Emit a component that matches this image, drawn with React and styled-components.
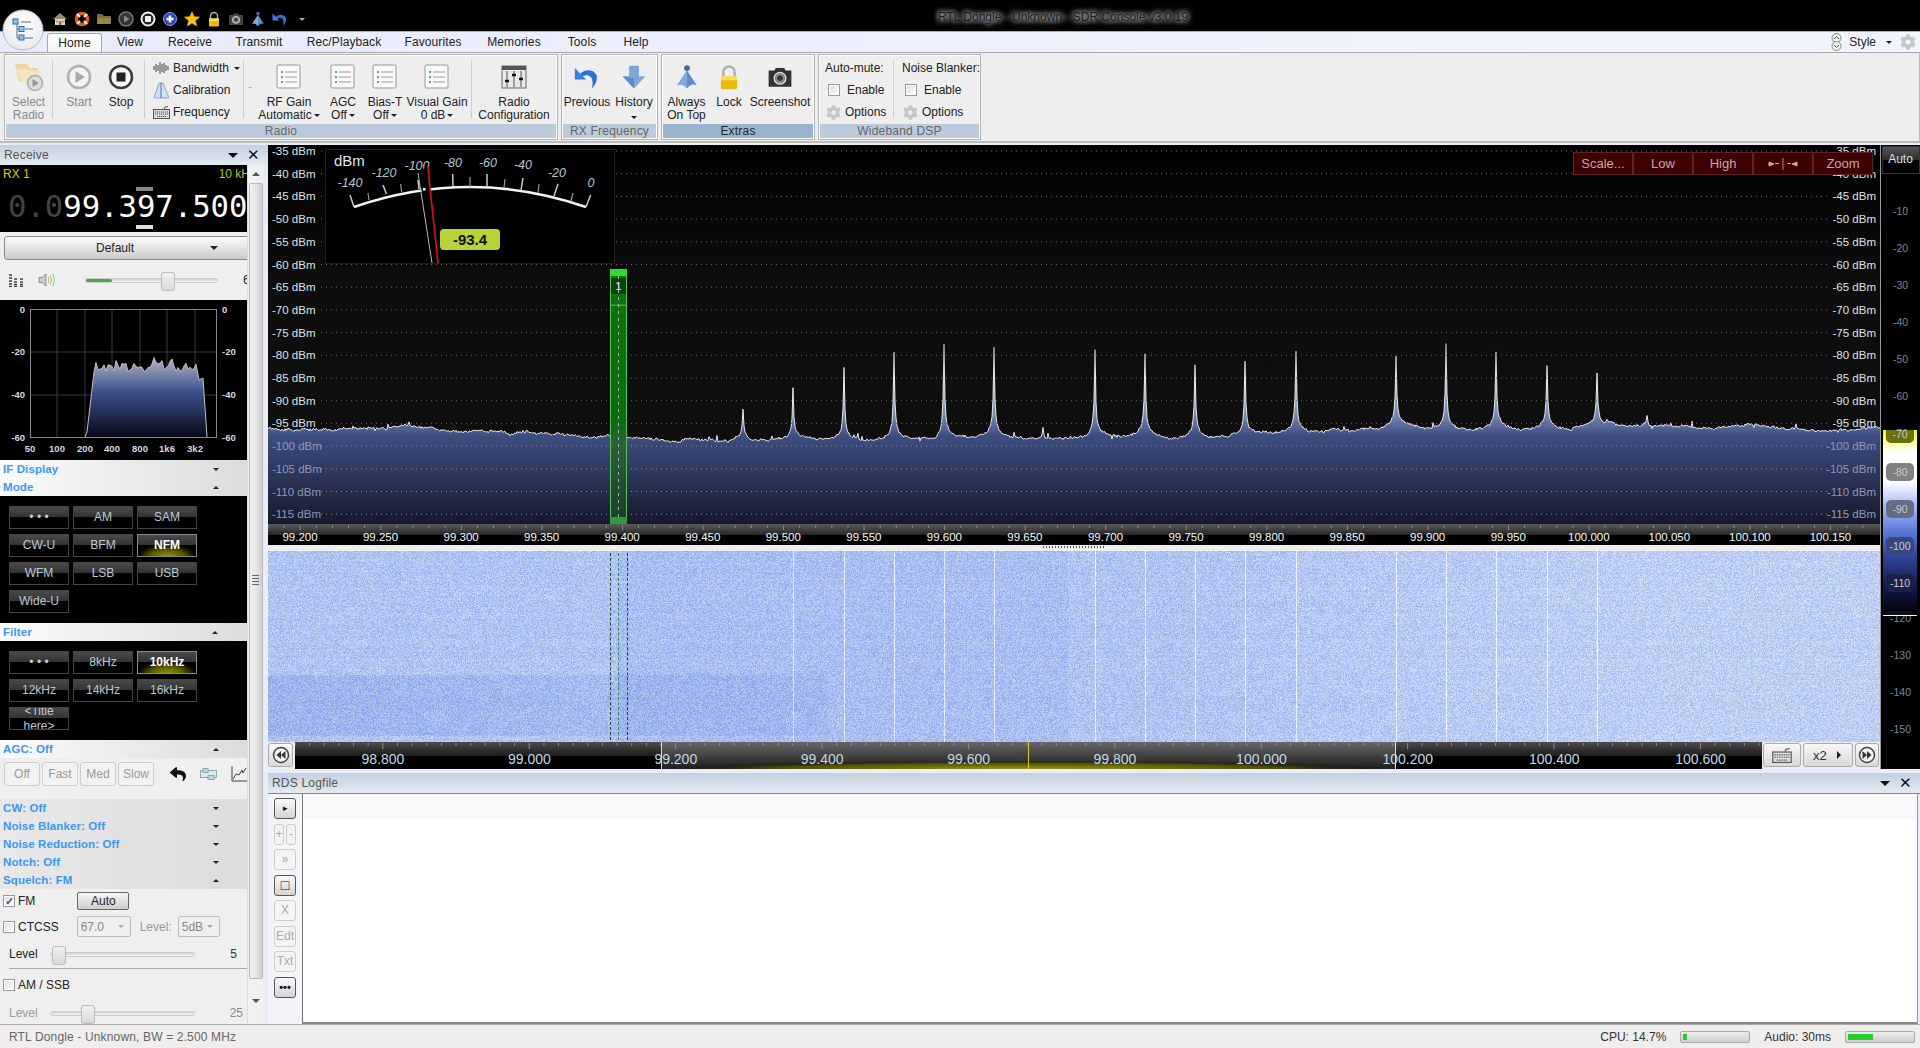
import React, { useEffect, useRef } from 'react';
import styled, { createGlobalStyle } from 'styled-components';
import { FaCog, FaReply } from 'react-icons/fa';

const UI = `"Liberation Sans", Arial, sans-serif`;

const GlobalStyle = createGlobalStyle`
    html, body { margin: 0; padding: 0; background: #e9edfb; overflow: hidden; }
    * { box-sizing: border-box; }
`;

const rng = (seed) => () => (seed = (seed * 16807) % 2147483647) / 2147483647;

/* ---------- shell ---------- */
const Shell = styled.div`
    width: 1920px;
    height: 1048px;
    display: flex;
    flex-direction: column;
    font-family: ${UI};
    font-size: 12px;
    color: #222;
    overflow: hidden;
    position: relative;
`;

const TitleBar = styled.div`
    height: 31px;
    flex: none;
    background: #000;
    display: flex;
    align-items: center;
    padding: 7px 0 0 49px;
`;

const Qat = styled.div`
    display: flex;
    align-items: center;
    width: 264px;
`;

const QatSlot = styled.span`
    width: 22px;
    height: 18px;
    display: flex;
    align-items: center;
    justify-content: center;
`;

const WindowTitle = styled.div`
    margin: -5px 0 0 625px;
    color: #1c1c1c;
    font-size: 12px;
    text-shadow: 0 0 5px #bbb, 0 0 5px #bbb, 0 0 8px #999;
`;

const OrbWrap = styled.div`
    position: absolute;
    left: 2px;
    top: 9px;
    width: 42px;
    height: 42px;
    z-index: 3;
`;

const TabBar = styled.div`
    height: 21px;
    flex: none;
    background: linear-gradient(90deg, #e8ecfa, #f1f5ff);
    border-top: 1px solid #aaa;
    display: flex;
    align-items: flex-end;
    padding-left: 47px;
`;

const Tab = styled.div`
    width: ${(p) => p.$w}px;
    height: 19px;
    text-align: center;
    line-height: 18px;
    letter-spacing: 0.1px;
    ${(p) => p.$active && `
        background: linear-gradient(#fff, #f4f4f4);
        border: 1px solid #aaa;
        border-bottom: none;
        border-radius: 3px 3px 0 0;
    `}
`;

const StyleArea = styled.div`
    margin-left: auto;
    height: 20px;
    display: flex;
    align-items: center;
    padding-right: 4px;
`;

const StyleLabel = styled.span`
    margin: 0 10px 0 6px;
`;

const Caret = styled.span`
    width: 0;
    height: 0;
    display: inline-block;
    border-left: ${(p) => p.$s || 3}px solid transparent;
    border-right: ${(p) => p.$s || 3}px solid transparent;
    ${(p) => (p.$up ? 'border-bottom' : 'border-top')}: ${(p) => p.$s || 3}px solid ${(p) => p.$c || '#222'};
`;

/* ---------- ribbon ---------- */
const Ribbon = styled.div`
    height: 91px;
    flex: none;
    background: #eee;
    border-top: 1px solid #aaa;
    border-right: 1px solid #bbb;
    border-bottom: 2px solid #bbb;
    display: flex;
    gap: 3px;
    padding: 1px 0 1px 4px;
`;

const Group = styled.div`
    width: ${(p) => p.$w}px;
    display: flex;
    flex-direction: column;
    border: 1px solid #b4b4b4;
    box-shadow: inset 0 0 0 1px #fff;
`;

const GroupBody = styled.div`
    height: 70px;
    display: flex;
    align-items: flex-start;
    padding-top: 2px;
`;

const GroupFooter = styled.div`
    flex: 1;
    margin: 0 1px 1px;
    text-align: center;
    line-height: 14px;
    background: ${(p) => (p.$hot ? '#9ab4d0' : '#bccbdb')};
    color: ${(p) => (p.$hot ? '#222' : '#666')};
    letter-spacing: 0.2px;
`;

const Big = styled.div`
    width: ${(p) => p.$w}px;
    flex: none;
    display: flex;
    flex-direction: column;
    align-items: center;
    color: ${(p) => (p.$off ? '#8a8a8a' : '#222')};
    line-height: 13px;
    text-align: center;
    white-space: nowrap;
`;

const BigIcon = styled.div`
    height: 39px;
    display: flex;
    align-items: center;
    justify-content: center;
`;

const Sep = styled.div`
    width: 1px;
    height: 58px;
    margin: 3px ${(p) => p.$r || 0}px 0 ${(p) => p.$l || 0}px;
    background: #cfcfcf;
    flex: none;
`;

const Dash = styled.div`
    width: 12px;
    flex: none;
    text-align: center;
    color: #aaa;
    line-height: 60px;
`;

const SmallCol = styled.div`
    width: ${(p) => p.$w}px;
    flex: none;
    display: flex;
    flex-direction: column;
    margin-left: ${(p) => p.$l || 0}px;
`;

const SmallRow = styled.div`
    height: 22px;
    display: flex;
    align-items: center;
    gap: ${(p) => p.$gap ?? 5}px;
    white-space: nowrap;
    padding-left: ${(p) => p.$pad || 0}px;
`;

const Check = styled.span`
    width: 12px;
    height: 12px;
    flex: none;
    display: inline-flex;
    border: 1px solid #999;
    background: linear-gradient(135deg, #ddd, #fff);
    box-shadow: inset 0 0 0 1px #fff;
    align-items: center;
    justify-content: center;
    color: #3c52a8;
    font-size: 11px;
    line-height: 10px;
    font-weight: bold;
`;

/* ---------- layout of the body ---------- */
const Body = styled.div`
    flex: 1;
    display: flex;
    margin-top: 2px;
    min-height: 0;
`;

const LeftPane = styled.div`
    width: 268px;
    flex: none;
    display: flex;
    flex-direction: column;
`;

const PaneHeader = styled.div`
    height: ${(p) => p.$h || 20}px;
    flex: none;
    background: linear-gradient(#c3d1de, #e3eaf1);
    display: flex;
    align-items: center;
    padding: 0 8px 0 4px;
    color: #555;
    letter-spacing: 0.2px;
    ${(p) => p.$line && 'border-bottom: 1px solid #888;'}
`;

const HeaderTools = styled.div`
    margin-left: auto;
    display: flex;
    align-items: center;
    gap: 9px;
    color: #111;
    font-size: 15px;
    line-height: 12px;
`;

const LeftRow = styled.div`
    flex: 1;
    display: flex;
    min-height: 0;
`;

const LeftColumn = styled.div`
    width: 247px;
    flex: none;
    display: flex;
    flex-direction: column;
    background: #efefef;
    overflow: hidden;
`;

const Scrollbar = styled.div`
    width: 16px;
    flex: none;
    background: #f1f1f1;
    display: flex;
    flex-direction: column;
    align-items: center;
    border-left: 1px solid #ddd;
`;

const ScrollEnd = styled.div`
    height: ${(p) => p.$h}px;
    display: flex;
    align-items: center;
    justify-content: center;
`;

const ScrollThumb = styled.div`
    width: 14px;
    height: 810px;
    border: 1px solid #bbb;
    border-radius: 2px;
    background: linear-gradient(90deg, #f4f4f4, #e4e4e4 50%, #cfcfcf);
    display: flex;
    flex-direction: column;
    align-items: center;
    justify-content: center;
    gap: 1px;
`;

const GripLine = styled.i`
    display: block;
    width: 7px;
    height: 1px;
    background: #666;
    margin-bottom: 1px;
`;

const Sash = styled.div`
    flex: 1;
    background: #e9edfb;
`;

/* ---------- receive panel ---------- */
const FreqPanel = styled.div`
    height: 67px;
    flex: none;
    background: #000;
    position: relative;
    overflow: hidden;
`;

const RxLine = styled.div`
    display: flex;
    justify-content: space-between;
    padding: 2px 0 0 3px;
    margin-right: -9px;
    line-height: 15px;
    color: #d8d000;
`;

const RxBand = styled.span`
    color: #a8cf10;
`;

const FreqText = styled.div`
    font-family: "DejaVu Sans Mono", monospace;
    font-size: 30.6px;
    line-height: 34px;
    margin: 8px 0 0 8px;
    color: #fff;
    white-space: nowrap;
`;

const FreqDim = styled.span`
    color: #444;
`;

const DigitBar = styled.div`
    position: absolute;
    left: 136px;
    width: 17px;
    height: 4px;
    top: ${(p) => p.$top}px;
    background: ${(p) => p.$c};
`;

const PresetArea = styled.div`
    height: 68px;
    flex: none;
    padding-top: 4px;
`;

const PresetButton = styled.div`
    height: 24px;
    margin-left: 4px;
    width: 250px;
    border: 1px solid #888;
    border-radius: 3px;
    background: linear-gradient(#fafafa, #e6e6e6 45%, #cacaca);
    display: flex;
    align-items: center;
    padding-left: 91px;
`;

const PresetCaret = styled.span`
    margin-left: 76px;
    display: inline-flex;
`;

const VolumeRow = styled.div`
    height: 40px;
    display: flex;
    align-items: center;
    position: relative;
    padding-left: 8px;
`;

const VolumeEnd = styled.span`
    position: absolute;
    left: 243px;
    top: 13px;
`;

const Track = styled.div`
    position: relative;
    width: ${(p) => p.$w}px;
    height: 5px;
    margin-left: ${(p) => p.$l || 0}px;
    border: 1px solid #ccc;
    border-radius: 3px;
    background: linear-gradient(#cfcfcf, #f8f8f8);
    flex: none;
`;

const TrackFill = styled.div`
    width: ${(p) => p.$w}px;
    height: 3px;
    background: #3cb043;
    border-radius: 2px;
`;

const Thumb = styled.div`
    position: absolute;
    top: -7px;
    left: ${(p) => p.$l}px;
    width: 14px;
    height: 19px;
    border: 1px solid #bbb;
    border-radius: 3px;
    background: linear-gradient(#f2f2f2, #d8d8d8);
`;

const AudioBox = styled.div`
    height: 160px;
    flex: none;
    background: #000;
`;

const ChartText = styled.text`
    font-family: ${UI};
    font-size: ${(p) => p.$s || 10}px;
    fill: ${(p) => p.$c || '#d5d9e0'};
    text-anchor: ${(p) => p.$a || 'middle'};
    font-style: ${(p) => (p.$i ? 'italic' : 'normal')};
    font-weight: ${(p) => (p.$b ? 'bold' : 'normal')};
`;

const SectionHeader = styled.div`
    height: ${(p) => p.$h || 18}px;
    flex: none;
    background: ${(p) => (p.$flat ? 'transparent' : 'linear-gradient(90deg, #fbfbfb, #dcdcdc)')};
    display: flex;
    align-items: center;
    padding: 0 28px 0 3px;
    color: #3a97f5;
    font-weight: bold;
    font-size: 11.5px;
    letter-spacing: 0.1px;
    justify-content: space-between;
`;

const CollapseBox = styled.span`
    width: 9px;
    height: 9px;
    display: flex;
    align-items: center;
    justify-content: center;
`;

const ButtonGrid = styled.div`
    height: ${(p) => p.$h}px;
    flex: none;
    background: #000;
    display: grid;
    grid-template-columns: repeat(3, 60px);
    grid-auto-rows: 23px;
    gap: 5px 4px;
    padding: 10px 0 0 9px;
`;

const DarkButton = styled.div`
    border: 1px solid ${(p) => (p.$on ? '#8a8a8a' : '#444')};
    background: ${(p) =>
        p.$on
            ? 'radial-gradient(ellipse 50% 55% at 50% 100%, #8f8f00, #5a5a00 55%, transparent 100%), linear-gradient(#4a4a4a, #333 47%, #000 48%)'
            : 'linear-gradient(#4a4a4a, #333 47%, #000 48%)'};
    color: ${(p) => (p.$on ? '#fff' : '#b9cad6')};
    font-weight: ${(p) => (p.$on ? 'bold' : 'normal')};
    text-align: center;
    line-height: ${(p) => (p.$wrap ? '15px' : '21px')};
    overflow: hidden;
    white-space: ${(p) => (p.$wrap ? 'normal' : 'nowrap')};
    ${(p) => p.$wrap && 'margin: 0; padding-top: 0; display: flex; flex-direction: column; justify-content: center;'}
`;

const AgcRow = styled.div`
    height: 41px;
    flex: none;
    display: flex;
    align-items: flex-start;
    padding: 4px 0 0 4px;
    gap: 2px;
`;

const GhostButton = styled.div`
    width: 37px;
    height: 24px;
    border: 1px solid #ccc;
    border-radius: 3px;
    background: #f2f2f2;
    color: #999;
    text-align: center;
    line-height: 22px;
`;

const AgcIcons = styled.div`
    display: flex;
    align-items: center;
    height: 24px;
    margin-left: 14px;
    gap: 14px;
`;

const CollapsedBlock = styled.div`
    flex: none;
    background: linear-gradient(90deg, #e8e8e8, #dcdcdc);
`;

const OptionRow = styled.div`
    height: ${(p) => p.$h}px;
    flex: none;
    display: flex;
    align-items: center;
    padding-left: ${(p) => p.$l || 3}px;
    gap: ${(p) => p.$gap ?? 3}px;
    position: relative;
`;

const PlainButton = styled.div`
    width: 52px;
    height: 18px;
    margin-left: 39px;
    border: 1px solid #666;
    border-radius: 2px;
    background: linear-gradient(#f6f6f6, #cdcdcd);
    text-align: center;
    line-height: 16px;
`;

const Combo = styled.div`
    width: ${(p) => p.$w}px;
    height: 21px;
    margin-left: ${(p) => p.$l || 0}px;
    border: 1px solid #bbb;
    border-radius: 2px;
    color: #888;
    display: flex;
    align-items: center;
    justify-content: space-between;
    padding: 0 6px 0 3px;
`;

const Faded = styled.span`
    color: #999;
    margin-left: ${(p) => p.$l || 0}px;
`;

const EndValue = styled.span`
    position: absolute;
    right: ${(p) => p.$r}px;
    color: ${(p) => p.$c || '#333'};
`;

const Rule = styled.div`
    height: 1px;
    flex: none;
    background: #aaa;
    margin-left: 9px;
`;

/* ---------- main display ---------- */
const MainPane = styled.div`
    flex: 1;
    display: flex;
    flex-direction: column;
    min-width: 0;
`;

const DisplayRow = styled.div`
    display: flex;
    height: 624px;
    flex: none;
`;

const DisplayColumn = styled.div`
    width: 1612px;
    flex: none;
    display: flex;
    flex-direction: column;
`;

const SpectrumBox = styled.div`
    position: relative;
    height: 379px;
    flex: none;
    background: linear-gradient(#000, #0d0d0d 35%, #0f0f0f);
`;

const BlockSvg = styled.svg`
    display: block;
    flex: none;
`;

const ScaleBar = styled.div`
    position: absolute;
    right: 7px;
    top: 7px;
    display: flex;
    height: 23px;
`;

const ScaleButton = styled.div`
    width: 60px;
    background: #3e0000;
    border: 1px solid #5c2323;
    color: #c4a8a8;
    font-size: 13px;
    text-align: center;
    line-height: 21px;
    display: flex;
    align-items: center;
    justify-content: center;
    gap: 2px;
`;

const SashBar = styled.div`
    height: 6px;
    flex: none;
    background: #eeeeee;
    display: flex;
    justify-content: center;
    align-items: flex-start;
    padding-top: 1px;
`;

const SashDots = styled.div`
    width: 62px;
    height: 2px;
    background: repeating-linear-gradient(90deg, #555 0 1px, transparent 1px 3px);
`;

const WaterfallBox = styled.div`
    height: 191px;
    flex: none;
    position: relative;
`;

const WaterfallCanvas = styled.canvas`
    display: block;
`;

const MarkerLine = styled.div`
    position: absolute;
    top: 2px;
    bottom: 2px;
    left: ${(p) => p.$x}px;
    width: 0;
    border-left: 1px dashed ${(p) => p.$c};
`;

const OverviewBar = styled.div`
    height: 27px;
    flex: none;
    display: flex;
    background: #eee;
`;

const RoundButton = styled.div`
    width: ${(p) => p.$w}px;
    height: 24px;
    margin: 1px ${(p) => p.$r ?? 2}px 0 ${(p) => p.$l || 0}px;
    border: 1px solid #aaa;
    border-radius: 3px;
    background: linear-gradient(#f8f8f8, #d8d8d8);
    display: flex;
    align-items: center;
    justify-content: ${(p) => p.$between ? 'space-between' : 'center'};
    padding: 0 ${(p) => (p.$between ? 9 : 0)}px;
    font-size: 13px;
    color: #234;
    flex: none;
`;

const Strip = styled.div`
    flex: 1;
    background: #000;
    position: relative;
    display: flex;
    flex-direction: column;
    align-items: center;
    border-left: 1px solid #999;
`;

const AutoButton = styled.div`
    width: 38px;
    height: 28px;
    margin-top: 1px;
    border: 1px solid #333;
    background: linear-gradient(#555, #2b2b2b 50%, #000 51%);
    color: #d8e4f0;
    text-align: center;
    line-height: 24px;
    flex: none;
`;

const ScaleList = styled.div`
    margin-top: 19px;
    display: flex;
    flex-direction: column;
    color: #7d8794;
    font-size: 10.5px;
`;

const ScaleItem = styled.div`
    height: 37px;
    line-height: 37px;
    text-align: center;
`;

const ColorBar = styled.div`
    position: absolute;
    left: 2px;
    top: 285px;
    width: 34px;
    height: 186px;
    overflow: hidden;
    border-bottom: 1px solid #fff;
    background: linear-gradient(#f4f400, #fbfb90 6%, #fff 12%, #fff 28%, #a9c0fb 40%, #5a78d8 55%, #2c3e90 70%, #0e1440 88%, #000 100%);
    display: flex;
    flex-direction: column;
    align-items: center;
    gap: 19px;
`;

const ColorChip = styled.div`
    width: 28px;
    height: 18px;
    flex: none;
    margin-top: ${(p) => p.$mt || 0}px;
    border-radius: 5px;
    background: ${(p) => p.$c};
    color: #ccc;
    font-size: 10.5px;
    text-align: center;
    line-height: 18px;
`;

/* ---------- RDS ---------- */
const RdsGap = styled.div`
    height: 4px;
    flex: none;
`;

const RdsBody = styled.div`
    height: 230px;
    flex: none;
    display: flex;
`;

const RdsTools = styled.div`
    width: 34px;
    flex: none;
    background: #f3f4f8;
    display: flex;
    flex-direction: column;
    align-items: center;
    padding-top: 4px;
    gap: 4.5px;
`;

const ToolRow = styled.div`
    display: flex;
    gap: 2px;
`;

const ToolButton = styled.div`
    width: ${(p) => p.$w || 22}px;
    height: 21px;
    border: 1px solid ${(p) => (p.$on ? '#555' : '#ccc')};
    border-radius: 3px;
    background: ${(p) => (p.$on ? 'linear-gradient(#fafafa, #d4d4d4)' : '#f4f4f4')};
    color: ${(p) => (p.$on ? '#111' : '#aaa')};
    text-align: center;
    line-height: 19px;
    font-size: ${(p) => p.$s || 12}px;
    font-weight: ${(p) => (p.$b ? 'bold' : 'normal')};
    display: flex;
    align-items: center;
    justify-content: center;
`;

const LogBox = styled.div`
    flex: 1;
    margin-right: 2px;
    background: #fff;
    border-left: 1px solid #777;
    border-right: 1px solid #999;
    border-bottom: 2px solid #888;
`;

const LogHead = styled.div`
    height: 25px;
    background: #f8f8fa;
`;

/* ---------- status bar ---------- */
const StatusBar = styled.div`
    height: 24px;
    flex: none;
    background: #f0eeec;
    border-top: 1px solid #aaa;
    display: flex;
    align-items: center;
    padding: 0 5px 0 9px;
    color: #666;
    letter-spacing: 0.15px;
`;

const StatusRight = styled.div`
    margin-left: auto;
    display: flex;
    align-items: center;
    color: #333;
    letter-spacing: 0;
`;

const Meter = styled.div`
    width: 70px;
    height: 12px;
    margin: 0 14px;
    border: 1px solid #aaa;
    border-radius: 2px;
    background: linear-gradient(#ececec, #cfcfcf);
    padding: 2px;
    &:last-child { margin-right: 0; }
`;

const MeterFill = styled.div`
    height: 6px;
    width: ${(p) => p.$w}px;
    background: #25cf25;
`;

/* ---------- icons ---------- */
const Orb = () => (
    <svg width="42" height="42" viewBox="0 0 42 42">
        <defs>
            <radialGradient id="orbFill" cx="50%" cy="35%" r="70%">
                <stop offset="0" stopColor="#fff" />
                <stop offset="1" stopColor="#e4e7ee" />
            </radialGradient>
        </defs>
        <circle cx="21" cy="21" r="20" fill="url(#orbFill)" stroke="#bbb" />
        <path d="M15 13 V29 M15 20 H18 M15 29 H18 M19 13 H29 M23 20 H31 M23 29 H31" stroke="#666" fill="none" />
        <rect x="11" y="10" width="5" height="5" fill="#8fc3ee" stroke="#2a6fb0" />
        <rect x="17" y="17.500" width="5" height="5" fill="#8fc3ee" stroke="#2a6fb0" />
        <rect x="17" y="26" width="5" height="5" fill="#8fc3ee" stroke="#2a6fb0" />
    </svg>
);

const Ico = ({ s = 16, children }) => (
    <svg width={s} height={s} viewBox="0 0 16 16">{children}</svg>
);

const House = () => (
    <Ico>
        <path d="M1 8 L8 2 L15 8 Z" fill="#9a8a70" />
        <rect x="3" y="8" width="10" height="6" fill="#e6d9c0" />
        <rect x="7" y="10" width="2.500" height="4" fill="#b5602c" />
        <rect x="4" y="9.500" width="2" height="2" fill="#7aa0c0" />
        <rect x="10.500" y="9.500" width="2" height="2" fill="#7aa0c0" />
    </Ico>
);
const Lifesaver = () => (
    <Ico>
        <circle cx="8" cy="8" r="5.500" fill="none" stroke="#e4601a" strokeWidth="3.500" />
        <path d="M3 3 L6 6 M13 3 L10 6 M3 13 L6 10 M13 13 L10 10" stroke="#f4e8dc" strokeWidth="2.200" />
    </Ico>
);
const Folder = () => (
    <Ico>
        <path d="M1 3 H6 L8 5 H15 V13 H1 Z" fill="#7c6c36" />
        <path d="M2 7 H15 L14 13 H1 Z" fill="#97874a" />
    </Ico>
);
const PlayIco = () => (
    <Ico>
        <circle cx="8" cy="8" r="7" fill="#333" stroke="#777" strokeWidth="1.500" />
        <path d="M6 4.500 L11.500 8 L6 11.500 Z" fill="#888" />
    </Ico>
);
const StopIco = () => (
    <Ico>
        <circle cx="8" cy="8" r="6.500" fill="#222" stroke="#eee" strokeWidth="2" />
        <rect x="5" y="5" width="6" height="6" fill="#eee" />
    </Ico>
);
const PlusIco = () => (
    <Ico>
        <circle cx="8" cy="8" r="6.500" fill="#2b46b8" stroke="#8ea0e0" />
        <path d="M8 4.500 V11.500 M4.500 8 H11.500" stroke="#fff" strokeWidth="2.500" />
    </Ico>
);
const Star = () => (
    <Ico>
        <path d="M8 0.500 L10.200 5.600 L15.700 6.100 L11.500 9.700 L12.800 15.200 L8 12.300 L3.200 15.200 L4.500 9.700 L0.300 6.100 L5.800 5.600 Z" fill="#f7c01e" stroke="#e0a000" strokeWidth="0.500" />
    </Ico>
);
const LockIco = ({ s }) => (
    <Ico s={s}>
        <path d="M4.500 8 V5 A3.500 3.500 0 0 1 11.500 5 V8" fill="none" stroke="#b0b0b0" strokeWidth="1.500" />
        <rect x="3" y="7.500" width="10" height="8" rx="1" fill="#eab90e" />
        <rect x="3" y="7.500" width="10" height="2.500" fill="#f8dc60" />
    </Ico>
);
const CameraIco = ({ s, c = '#444' }) => (
    <Ico s={s}>
        <path d="M1 4 H4.500 L5.500 2.500 H10.500 L11.500 4 H15 V14 H1 Z" fill={c} />
        <circle cx="8" cy="8.800" r="3.600" fill="#888" stroke="#ddd" strokeWidth="0.800" />
        <circle cx="8" cy="8.800" r="1.700" fill="#334" />
    </Ico>
);
const PersonIco = ({ s }) => (
    <Ico s={s}>
        <circle cx="8" cy="2.500" r="1.800" fill="#3f6fa8" />
        <path d="M8 4 L14 13 C11 12 10 13 8 15 C6 13 5 12 2 13 Z" fill="#5b8ec6" />
        <path d="M8 4 L8 15 C6 13 5 12 2 13 Z" fill="#7faad8" />
    </Ico>
);
const UndoIco = ({ s }) => (
    <Ico s={s}>
        <path d="M3 8 A6 6 0 0 1 14 7 C14.500 10 13 13 11 15 C12 11 11.500 7.500 8 6.800 Z" fill="#2f6fd0" />
        <path d="M0.500 2.500 L7.500 9.500 L0.500 9.500 Z" fill="#3a80e0" />
    </Ico>
);
const DownIco = ({ s }) => (
    <Ico s={s}>
        <path d="M5 1 H11 V7.500 H15 L8 15 L1 7.500 H5 Z" fill="#7ea6dd" />
        <path d="M8 15 L8 9 L1 7.500 Z" fill="#5b88cf" />
    </Ico>
);
const SelectRadioIco = () => (
    <svg width="30" height="30" viewBox="0 0 30 30">
        <path d="M1 2 H13 L16 6 H24 V20 H5 Z" fill="#e8d9a4" />
        <path d="M3 7 L26 9 L23 22 L7 20 Z" fill="#f2e6bc" />
        <circle cx="21" cy="21" r="7.500" fill="#ddd" stroke="#aaa" strokeWidth="1.500" />
        <path d="M18.500 17 L25 21 L18.500 25 Z" fill="#999" />
    </svg>
);
const StartIco = () => (
    <svg width="26" height="26" viewBox="0 0 26 26">
        <circle cx="13" cy="13" r="11" fill="#f3f3f3" stroke="#b0b0b0" strokeWidth="2.500" />
        <path d="M9.500 7 L19 13 L9.500 19 Z" fill="#aaa" />
    </svg>
);
const StopBigIco = () => (
    <svg width="26" height="26" viewBox="0 0 26 26">
        <circle cx="13" cy="13" r="11" fill="#f6f6f6" stroke="#3a3a3a" strokeWidth="2.500" />
        <rect x="8.500" y="8.500" width="9" height="9" fill="#222" />
    </svg>
);
const ListIco = () => (
    <svg width="26" height="26" viewBox="0 0 26 26">
        <rect x="1" y="1" width="23" height="23" rx="2" fill="#fafafa" stroke="#b8b8b8" strokeWidth="1.500" />
        <path d="M9 8 H21 M9 13 H21 M9 18 H21" stroke="#999" />
        <path d="M5 8 H7 M5 13 H7 M5 18 H7" stroke="#4a9ae0" strokeWidth="2" />
    </svg>
);
const ConfigIco = () => (
    <svg width="26" height="24" viewBox="0 0 26 24">
        <rect x="1" y="1" width="24" height="22" fill="#e8e8e8" stroke="#666" />
        <rect x="1" y="1" width="24" height="4" fill="#555" />
        <path d="M6 6 V22 M13 6 V22 M20 6 V22" stroke="#555" />
        <path d="M4 16 H8 M11 10 H15 M18 14 H22" stroke="#111" strokeWidth="2.500" />
    </svg>
);
const WaveIco = () => (
    <svg width="17" height="14" viewBox="0 0 17 14">
        <path d="M1 5 V9 M3 3 V11 M5 4 V10 M7 1 V13 M9 3 V11 M11 2 V12 M13 4 V10 M15 5 V9" stroke="#444" />
    </svg>
);
const CalibIco = () => (
    <svg width="17" height="17" viewBox="0 0 17 17">
        <path d="M6 1 H10 L16 16 H1 Z" fill="#cfe0f2" stroke="#8aa8c8" />
        <path d="M8 1 V16" stroke="#4a7ab0" />
    </svg>
);
const KeyboardIco = ({ w = 17, h = 13 }) => (
    <svg width={w} height={h} viewBox="0 0 17 13">
        <path d="M11 3 L12 1 L15 0.500" stroke="#555" fill="none" />
        <rect x="0.500" y="3.500" width="16" height="9" fill="#ddd" stroke="#555" />
        <path d="M2 6 H15 M2 8 H15 M4 10.500 H13" stroke="#555" strokeDasharray="1.200 0.800" />
    </svg>
);
const Gear = ({ s = 15 }) => <FaCog size={s} color="#c6c6c6" />;
const SpinIco = () => (
    <svg width="13" height="18" viewBox="0 0 13 18">
        <circle cx="6.500" cy="5" r="4.500" fill="#eee" stroke="#888" />
        <circle cx="6.500" cy="13" r="4.500" fill="#eee" stroke="#888" />
        <path d="M4 6 L6.500 3.500 L9 6 M4 12 L6.500 14.500 L9 12" stroke="#555" fill="none" />
    </svg>
);
const BarsIco = () => (
    <svg width="16" height="13" viewBox="0 0 16 13">
        <path d="M1 1 H4 M1 4 H4 M1 7 H4 M1 10 H4 M1 12.500 H4 M6 5 H9 M6 8 H9 M6 10.500 H9 M6 12.500 H9 M12 5 H15 M12 8 H15 M12 10.500 H15 M12 12.500 H15" stroke="#444" strokeWidth="1.500" />
    </svg>
);
const SpeakerIco = () => (
    <svg width="18" height="16" viewBox="0 0 18 16">
        <path d="M1 5.500 H4 L8 2 V14 L4 10.500 H1 Z" fill="#c9c9c9" stroke="#777" strokeWidth="0.700" />
        <path d="M10 5 Q12 8 10 11" stroke="#e8a060" fill="none" />
        <path d="M12 3.500 Q15 8 12 12.500 M14.500 2 Q18 8 14.500 14" stroke="#7cd07c" fill="none" />
    </svg>
);
const MiniChartIco = () => (
    <svg width="16" height="16" viewBox="0 0 16 16">
        <path d="M1 0 V15 H16" stroke="#444" fill="none" />
        <path d="M2 13 L5 8 L8 9 L11 4 L12 7 L15 2" stroke="#444" fill="none" />
    </svg>
);
const LinkIco = () => (
    <svg width="17" height="13" viewBox="0 0 17 13">
        <rect x="0.500" y="2.500" width="16" height="7" fill="#dfe8ee" stroke="#8aa" />
        <rect x="3" y="0.500" width="5" height="4" fill="#c5d4dc" stroke="#8aa" />
        <rect x="8" y="7.500" width="6" height="4" fill="#c5d4dc" stroke="#8aa" />
    </svg>
);
const SkipIco = ({ flip }) => (
    <svg width="18" height="18" viewBox="0 0 18 18">
        <circle cx="9" cy="9" r="7.500" fill="#f4f4f4" stroke="#444" strokeWidth="1.500" />
        <path d={flip ? 'M9 5 L4.500 9 L9 13 Z M13.500 5 L9 9 L13.500 13 Z' : 'M4.500 5 L9 9 L4.500 13 Z M9 5 L13.500 9 L9 13 Z'} fill="#333" />
    </svg>
);
const ScrollArrow = ({ up }) => <Caret $up={up} $s={4} $c="#555" />;

/* ---------- charts ---------- */
const PEAKS = [
    [743, 412], [793, 389], [844, 369], [894, 352], [944, 342], [994, 348], [1043, 424], [1095, 349],
    [1145, 356], [1195, 364], [1245, 361], [1296, 353], [1396, 361], [1446, 342], [1496, 351], [1547, 366], [1597, 376], [1647, 416],
];
const FLOOR = [[268, 428], [500, 431], [620, 437], [720, 440], [1000, 438], [1150, 437], [1400, 430], [1600, 427], [1880, 428]];

const floorAt = (x) => {
    for (let i = 1; i < FLOOR.length; i++) {
        if (x <= FLOOR[i][0]) {
            const [x0, y0] = FLOOR[i - 1];
            const [x1, y1] = FLOOR[i];
            return y0 + ((y1 - y0) * (x - x0)) / (x1 - x0);
        }
    }
    return 428;
};

const buildTrace = () => {
    const r = rng(4711);
    let slow = 0;
    const pts = [];
    for (let x = 268; x <= 1880; x++) {
        slow = (slow + (r() - 0.5) * 1.4) * 0.96;
        const base = floorAt(x);
        let y = base + slow + (r() - 0.5) * 2.2;
        if (r() > 0.965) y += (r() - 0.6) * 9;
        let lift = 0;
        PEAKS.forEach(([px, top]) => {
            const h = base - top;
            const d = Math.abs(x - px);
            lift = Math.max(lift, h * (0.72 * Math.exp(-d / 0.8) + 0.2 * Math.exp(-d / 3)) + (h > 20 ? 7 * Math.exp(-d / 9) : 0));
        });
        pts.push(`${x},${(y - lift).toFixed(1)}`);
    }
    return pts.join(' ');
};

const buildAudio = () => {
    const r = rng(99);
    const pts = ['85,437', '87,432', '94,372'];
    for (let x = 96; x <= 196; x += 2) {
        pts.push(`${x},${(367 + (r() - 0.5) * 9 + (r() > 0.9 ? -5 : 0)).toFixed(1)}`);
    }
    pts.push('199,380', '203,378', '207,437');
    return pts.join(' ');
};

const TRACE = buildTrace();
const AUDIO = buildAudio();

const DB_LEVELS = Array.from({ length: 17 }, (_, i) => ({ db: -35 - i * 5, y: 151 + i * 22.7 }));
const SPEC_FREQS = Array.from({ length: 20 }, (_, i) => ({ label: (99.2 + i * 0.05).toFixed(3), x: 300 + i * 80.55 }));
const OVER_FREQS = Array.from({ length: 10 }, (_, i) => ({ label: (98.8 + i * 0.2).toFixed(3), x: 383 + i * 146.4 }));

const MAJOR_TICKS = [
    ['-140', 350, 187, 'M354 207 L350 195'], ['-120', 384, 177, 'M386.500 194 L383 185'], ['-100', 417, 170, 'M419 189 L418 180'],
    ['-80', 453, 167, 'M453 187 L452.700 174'], ['-60', 488, 167, 'M487 187 L487 174'], ['-40', 523, 169, 'M521 190 L523 178'],
    ['-20', 557, 177, 'M554 196 L558 184'], ['0', 591, 187, 'M586 207 L590.600 195'],
];
const MINOR_TICKS = 'M369 200 L368 193 M401.600 192 L400.600 184 M470 187 L470 177 M504 188 L505 179 M538 193 L539 184 M571 201 L573 193';

const Spectrum = () => (
    <BlockSvg width="1612" height="379" viewBox="268 145 1612 379">
        <defs>
            <linearGradient id="specFill" gradientUnits="userSpaceOnUse" x1="0" y1="340" x2="0" y2="524">
                <stop offset="0" stopColor="#c8c8c8" />
                <stop offset="0.4" stopColor="#7a8ab8" />
                <stop offset="0.52" stopColor="#3e4d80" />
                <stop offset="1" stopColor="#15192c" />
            </linearGradient>
            <linearGradient id="specLine" gradientUnits="userSpaceOnUse" x1="0" y1="340" x2="0" y2="440">
                <stop offset="0" stopColor="#999" />
                <stop offset="0.4" stopColor="#eee" />
                <stop offset="1" stopColor="#e0e0e0" />
            </linearGradient>
            <linearGradient id="markerFill" gradientUnits="userSpaceOnUse" x1="0" y1="269" x2="0" y2="524">
                <stop offset="0" stopColor="#0e7410" />
                <stop offset="0.6" stopColor="#0f6a10" />
                <stop offset="0.68" stopColor="#2f5f3e" />
                <stop offset="1" stopColor="#1a3a28" />
            </linearGradient>
        </defs>
        <polygon points={`268,524 ${TRACE} 1880,524`} fill="url(#specFill)" />
        <polyline points={TRACE} fill="none" stroke="url(#specLine)" strokeWidth="1" />
        {DB_LEVELS.map(({ db, y }) => (
            <g key={db}>
                <line x1="321" x2="1827" y1={y} y2={y} stroke={db <= -100 ? '#8a8fa8' : '#6a6a6a'} strokeDasharray="1 4" />
                <ChartText x="272" y={y + 4} $a="start" $s={11.5} $c={db <= -100 ? '#8d98b8' : '#dbe2ea'}>{db} dBm</ChartText>
                <ChartText x="1876" y={y + 4} $a="end" $s={11.5} $c={db <= -100 ? '#8d98b8' : '#dbe2ea'}>{db} dBm</ChartText>
            </g>
        ))}

        <rect x="325.500" y="149.500" width="289" height="114" fill="#000" stroke="#1e1e1e" />
        <path d="M354 207 Q470 167 586 207" fill="none" stroke="#f4f4f4" strokeWidth="2.500" />
        <path d={MINOR_TICKS} stroke="#999" strokeWidth="1.200" />
        {MAJOR_TICKS.map(([label, x, y, d]) => (
            <g key={label}>
                <path d={d} stroke="#c8c8c8" strokeWidth="1.500" />
                <ChartText x={x} y={y} $s={12.5} $i $c="#b7c4d2">{label}</ChartText>
            </g>
        ))}
        <ChartText x="334" y="166" $a="start" $s={15} $c="#dce8f4">dBm</ChartText>
        <polygon points="419,172 428,166 439,263 432,263" fill="#000" />
        <line x1="418" y1="173" x2="432" y2="263" stroke="#bbb" strokeWidth="1" />
        <line x1="427.700" y1="165.700" x2="438" y2="263" stroke="#e01010" strokeWidth="1.600" />
        <rect x="423" y="188" width="2.500" height="2.500" fill="#fff" />
        <rect x="440" y="229" width="60" height="21" rx="4" fill="#b7d43a" />
        <ChartText x="470" y="245" $s={15} $b $c="#111">-93.4</ChartText>

        <rect x="610.500" y="269.500" width="16" height="255" fill="url(#markerFill)" stroke="#58c058" />
        <rect x="610" y="269" width="17" height="7" fill="#35d835" />
        <rect x="611" y="278" width="15" height="16" fill="#0a3f0a" />
        <rect x="611" y="304.500" width="15" height="1.500" fill="#3fa03f" />
        <line x1="618.500" x2="618.500" y1="276" y2="517" stroke="#80cf80" strokeDasharray="3 4" />
        <rect x="610" y="517" width="17" height="7" fill="#2f9a3f" />
        <ChartText x="618.500" y="290" $s={11.5} $c="#eef">1</ChartText>
    </BlockSvg>
);

const FreqRuler = () => (
    <BlockSvg width="1612" height="21" viewBox="268 524 1612 21">
        <defs>
            <linearGradient id="rulerFill" x1="0" y1="0" x2="0" y2="1">
                <stop offset="0" stopColor="#5a5a5a" />
                <stop offset="1" stopColor="#262626" />
            </linearGradient>
        </defs>
        <rect x="268" y="524" width="1612" height="21" fill="#000" />
        <rect x="268" y="524" width="1612" height="11" fill="url(#rulerFill)" />
        {Array.from({ length: 100 }, (_, i) => (
            <line key={i} x1={300 - 32 + i * 16.11} x2={300 - 32 + i * 16.11} y1="525" y2={i % 5 === 2 ? 530 : 528} stroke="#8a8a8a" />
        ))}
        {SPEC_FREQS.map(({ label, x }) => (
            <ChartText key={label} x={x} y="541" $s={11.5} $c="#f4f8fc">{label}</ChartText>
        ))}
    </BlockSvg>
);

const OverviewRuler = () => (
    <BlockSvg width="1467" height="27" viewBox="295 742 1467 27">
        <defs>
            <linearGradient id="overTop" x1="0" y1="0" x2="0" y2="1">
                <stop offset="0" stopColor="#4c4c4c" />
                <stop offset="1" stopColor="#1c1c1c" />
            </linearGradient>
            <linearGradient id="overSel" x1="0" y1="0" x2="0" y2="1">
                <stop offset="0" stopColor="#666" />
                <stop offset="1" stopColor="#1e1e1e" />
            </linearGradient>
            <radialGradient id="overGlow" cx="50%" cy="100%" r="50%" gradientTransform="translate(0 0)">
                <stop offset="0" stopColor="#9a9a10" />
                <stop offset="0.7" stopColor="#4c4c08" />
                <stop offset="1" stopColor="#000" stopOpacity="0" />
            </radialGradient>
        </defs>
        <rect x="295" y="742" width="1467" height="27" fill="#000" />
        <rect x="295" y="742" width="1467" height="14" fill="url(#overTop)" />
        <rect x="661" y="742" width="734" height="27" fill="url(#overSel)" />
        <rect x="661" y="752" width="734" height="17" fill="url(#overGlow)" />
        {Array.from({ length: 102 }, (_, i) => (
            <line key={i} x1={295 + i * 14.64} x2={295 + i * 14.64} y1="743" y2={i % 10 === 6 ? 749 : 746} stroke="#8a8a8a" />
        ))}
        <line x1="661.500" x2="661.500" y1="742" y2="769" stroke="#ddd" />
        <line x1="1395.500" x2="1395.500" y1="742" y2="769" stroke="#ddd" />
        <line x1="1028.500" x2="1028.500" y1="742" y2="769" stroke="#d8c820" />
        {OVER_FREQS.map(({ label, x }) => (
            <ChartText key={label} x={x} y="764" $s={14} $c="#c4d6e8">{label}</ChartText>
        ))}
    </BlockSvg>
);

const Waterfall = () => {
    const ref = useRef(null);
    useEffect(() => {
        const ctx = ref.current.getContext('2d');
        const W = 1612;
        const H = 191;
        const img = ctx.createImageData(W, H);
        const r = rng(2024);
        const rows = Array.from({ length: H }, () => (r() - 0.5) * 0.06);
        const lines = PEAKS.filter((p) => p[1] < 400).map((p) => p[0] - 268);
        for (let y = 0; y < H; y++) {
            for (let x = 0; x < W; x++) {
                let t = 0.5 + rows[y] + (r() - 0.5) * 0.42;
                t += x > 900 ? Math.min((x - 900) / 500, 1) * 0.1 : 0;
                t -= x > 350 && x < 800 ? 0.06 : 0;
                if (y > 123 && y < 185 && x < 560) t -= 0.15 * (1 - x / 900);
                if (lines.includes(x)) t += 0.45;
                t = Math.max(0, Math.min(1, t));
                const i = (y * W + x) * 4;
                img.data[i] = 112 + t * 130;
                img.data[i + 1] = 144 + t * 104;
                img.data[i + 2] = 232 + t * 22;
                img.data[i + 3] = 255;
            }
        }
        ctx.putImageData(img, 0, 0);
    }, []);
    return <WaterfallCanvas ref={ref} width="1612" height="191" />;
};

const AudioChart = () => (
    <BlockSvg width="247" height="160" viewBox="0 300 247 160">
        <defs>
            <linearGradient id="audioFill" gradientUnits="userSpaceOnUse" x1="0" y1="360" x2="0" y2="437">
                <stop offset="0" stopColor="#a8aec4" />
                <stop offset="0.42" stopColor="#3c4f88" />
                <stop offset="1" stopColor="#07091a" />
            </linearGradient>
        </defs>
        {[57, 85, 112, 140, 167, 195].map((x) => (
            <line key={x} x1={x} x2={x} y1="309" y2="437" stroke="#3a3a3a" />
        ))}
        <line x1="30" x2="216" y1="352" y2="352" stroke="#3a3a3a" />
        <line x1="30" x2="216" y1="395" y2="395" stroke="#3a3a3a" />
        <polygon points={AUDIO} fill="url(#audioFill)" />
        <polyline points={AUDIO} fill="none" stroke="#c0c0c0" />
        <rect x="30.500" y="309.500" width="186" height="128" fill="none" stroke="#888" />
        {[['0', 313], ['-20', 355], ['-40', 398], ['-60', 441]].map(([t, y]) => (
            <g key={t}>
                <ChartText x="25" y={y} $a="end" $s={9.5} $b>{t}</ChartText>
                <ChartText x="222" y={y} $a="start" $s={9.5} $b>{t}</ChartText>
            </g>
        ))}
        {[['50', 30], ['100', 57], ['200', 85], ['400', 112], ['800', 140], ['1k6', 167], ['3k2', 195]].map(([t, x]) => (
            <ChartText key={t} x={x} y="452" $s={9.5} $b>{t}</ChartText>
        ))}
    </BlockSvg>
);

/* ---------- ribbon parts ---------- */
const BigButton = ({ w, off, icon, lines }) => (
    <Big $w={w} $off={off}>
        <BigIcon>{icon}</BigIcon>
        {lines.map((l, i) => <span key={i}>{l}</span>)}
    </Big>
);

const MODES = ['• • •', 'AM', 'SAM', 'CW-U', 'BFM', 'NFM', 'WFM', 'LSB', 'USB', 'Wide-U'];
const FILTERS = ['• • •', '8kHz', '10kHz', '12kHz', '14kHz', '16kHz'];
const COLLAPSED = ['CW: Off', 'Noise Blanker: Off', 'Noise Reduction: Off', 'Notch: Off'];
const TABS = [['Home', 55], ['View', 56], ['Receive', 64], ['Transmit', 74], ['Rec/Playback', 96], ['Favourites', 82], ['Memories', 80], ['Tools', 56], ['Help', 52]];
const QAT_ICONS = [House, Lifesaver, Folder, PlayIco, StopIco, PlusIco, Star, LockIco, CameraIco, PersonIco, UndoIco];
const STRIP_SCALE = Array.from({ length: 15 }, (_, i) => -10 - i * 10);
const CHIPS = [['-70', '#6e6e10', -5], ['-80', '#808080', 1], ['-90', '#666c85', 0], ['-100', '#34487f', 0], ['-110', '#1a2148', 0], ['', '#0d1024', 0]];

const DropLabel = ({ children }) => (
    <span>{children}<Caret $s={3} style={{ marginLeft: 2, verticalAlign: 2 }} /></span>
);

const App = () => (
    <Shell>
        <GlobalStyle />
        <OrbWrap><Orb /></OrbWrap>
        <TitleBar>
            <Qat>
                {QAT_ICONS.map((I, i) => <QatSlot key={i}><I /></QatSlot>)}
                <QatSlot><Caret $c="#aaa" /></QatSlot>
            </Qat>
            <WindowTitle>RTL Dongle - Unknown - SDR Console v3.0.19</WindowTitle>
        </TitleBar>

        <TabBar>
            {TABS.map(([t, w]) => <Tab key={t} $w={w} $active={t === 'Home'}>{t}</Tab>)}
            <StyleArea>
                <SpinIco />
                <StyleLabel>Style</StyleLabel>
                <Caret />
                <span style={{ width: 8 }} />
                <Gear s={16} />
            </StyleArea>
        </TabBar>

        <Ribbon>
            <Group $w={554}>
                <GroupBody>
                    <BigButton w={47} off icon={<SelectRadioIco />} lines={['Select', 'Radio']} />
                    <Sep $r={5} />
                    <BigButton w={42} off icon={<StartIco />} lines={['Start']} />
                    <BigButton w={42} icon={<StopBigIco />} lines={['Stop']} />
                    <Sep $l={2} />
                    <SmallCol $w={90} $l={8}>
                        <SmallRow $gap={3}><WaveIco />Bandwidth<Caret style={{ marginLeft: 2 }} /></SmallRow>
                        <SmallRow $gap={3}><CalibIco />Calibration</SmallRow>
                        <SmallRow $gap={3}><KeyboardIco />Frequency</SmallRow>
                    </SmallCol>
                    <Sep />
                    <Dash>-</Dash>
                    <BigButton w={66} icon={<ListIco />} lines={['RF Gain', <DropLabel key="a">Automatic</DropLabel>]} />
                    <BigButton w={42} icon={<ListIco />} lines={['AGC', <DropLabel key="a">Off</DropLabel>]} />
                    <BigButton w={42} icon={<ListIco />} lines={['Bias-T', <DropLabel key="a">Off</DropLabel>]} />
                    <BigButton w={62} icon={<ListIco />} lines={['Visual Gain', <DropLabel key="a">0 dB</DropLabel>]} />
                    <Sep $l={3} $r={2} />
                    <BigButton w={80} icon={<ConfigIco />} lines={['Radio', 'Configuration']} />
                </GroupBody>
                <GroupFooter>Radio</GroupFooter>
            </Group>
            <Group $w={97}>
                <GroupBody>
                    <BigButton w={50} icon={<UndoIco s={26} />} lines={['Previous']} />
                    <BigButton w={44} icon={<DownIco s={26} />} lines={['History', <Caret key="c" style={{ marginTop: 4 }} />]} />
                </GroupBody>
                <GroupFooter>RX Frequency</GroupFooter>
            </Group>
            <Group $w={154}>
                <GroupBody>
                    <BigButton w={49} icon={<PersonIco s={26} />} lines={['Always', 'On Top']} />
                    <BigButton w={36} icon={<LockIco s={26} />} lines={['Lock']} />
                    <BigButton w={66} icon={<CameraIco s={26} c="#333" />} lines={['Screenshot']} />
                </GroupBody>
                <GroupFooter $hot>Extras</GroupFooter>
            </Group>
            <Group $w={163}>
                <GroupBody>
                    <SmallCol $w={68} $l={6}>
                        <SmallRow>Auto-mute:</SmallRow>
                        <SmallRow $gap={7} $pad={3}><Check />Enable</SmallRow>
                        <SmallRow $gap={4} $pad={1}><Gear />Options</SmallRow>
                    </SmallCol>
                    <Sep />
                    <SmallCol $w={76} $l={8}>
                        <SmallRow>Noise Blanker:</SmallRow>
                        <SmallRow $gap={7} $pad={3}><Check />Enable</SmallRow>
                        <SmallRow $gap={4} $pad={1}><Gear />Options</SmallRow>
                    </SmallCol>
                </GroupBody>
                <GroupFooter>Wideband DSP</GroupFooter>
            </Group>
        </Ribbon>

        <Body>
            <LeftPane>
                <PaneHeader>
                    Receive
                    <HeaderTools><Caret $s={5} $c="#111" />✕</HeaderTools>
                </PaneHeader>
                <LeftRow>
                    <LeftColumn>
                        <FreqPanel>
                            <RxLine>RX 1<RxBand>10 kHz</RxBand></RxLine>
                            <FreqText><FreqDim>0.0</FreqDim>99.397.500</FreqText>
                            <DigitBar $top={22} $c="#888" />
                            <DigitBar $top={60} $c="#ddd" />
                        </FreqPanel>
                        <PresetArea>
                            <PresetButton>Default<PresetCaret><Caret $s={4} /></PresetCaret></PresetButton>
                            <VolumeRow>
                                <BarsIco />
                                <span style={{ width: 14 }} />
                                <SpeakerIco />
                                <Track $w={133} $l={29}>
                                    <TrackFill $w={26} />
                                    <Thumb $l={75} />
                                </Track>
                                <VolumeEnd>6</VolumeEnd>
                            </VolumeRow>
                        </PresetArea>
                        <AudioBox><AudioChart /></AudioBox>
                        <SectionHeader $h={18}>IF Display<Caret /></SectionHeader>
                        <SectionHeader $h={18}>Mode<Caret $up /></SectionHeader>
                        <ButtonGrid $h={127}>
                            {MODES.map((m) => <DarkButton key={m} $on={m === 'NFM'}>{m}</DarkButton>)}
                        </ButtonGrid>
                        <SectionHeader $h={18}>Filter<CollapseBox><Caret $up /></CollapseBox></SectionHeader>
                        <ButtonGrid $h={99}>
                            {FILTERS.map((m) => <DarkButton key={m} $on={m === '10kHz'}>{m}</DarkButton>)}
                            <DarkButton $wrap>&lt;Title here&gt;</DarkButton>
                        </ButtonGrid>
                        <SectionHeader $h={18}>AGC: Off<Caret $up /></SectionHeader>
                        <AgcRow>
                            <GhostButton>Off</GhostButton>
                            <GhostButton>Fast</GhostButton>
                            <GhostButton>Med</GhostButton>
                            <GhostButton>Slow</GhostButton>
                            <AgcIcons>
                                <FaReply size={16} color="#111" />
                                <LinkIco />
                                <MiniChartIco />
                            </AgcIcons>
                        </AgcRow>
                        <CollapsedBlock>
                            {COLLAPSED.map((t) => <SectionHeader key={t} $flat>{t}<Caret /></SectionHeader>)}
                            <SectionHeader $flat>Squelch: FM<Caret $up /></SectionHeader>
                        </CollapsedBlock>
                        <OptionRow $h={24}>
                            <Check>✓</Check>FM
                            <PlainButton>Auto</PlainButton>
                        </OptionRow>
                        <OptionRow $h={27}>
                            <Check />CTCSS
                            <Combo $w={54} $l={15}>67.0<Caret $c="#aaa" /></Combo>
                            <Faded $l={6}>Level:</Faded>
                            <Combo $w={42} $l={3}>5dB<Caret $c="#aaa" /></Combo>
                        </OptionRow>
                        <OptionRow $h={28} $l={9} $gap={0}>
                            Level
                            <Track $w={145} $l={12}><Thumb $l={1} /></Track>
                            <EndValue $r={10}>5</EndValue>
                        </OptionRow>
                        <Rule />
                        <OptionRow $h={32}><Check />AM / SSB</OptionRow>
                        <OptionRow $h={24} $l={9} $gap={0}>
                            <Faded>Level</Faded>
                            <Track $w={145} $l={12}><Thumb $l={30} /></Track>
                            <EndValue $r={4} $c="#888">25</EndValue>
                        </OptionRow>
                    </LeftColumn>
                    <Scrollbar>
                        <ScrollEnd $h={18}><ScrollArrow up /></ScrollEnd>
                        <ScrollThumb>
                            <GripLine /><GripLine /><GripLine /><GripLine />
                        </ScrollThumb>
                        <ScrollEnd $h={46}><ScrollArrow /></ScrollEnd>
                    </Scrollbar>
                    <Sash />
                </LeftRow>
            </LeftPane>

            <MainPane>
                <DisplayRow>
                    <DisplayColumn>
                        <SpectrumBox>
                            <Spectrum />
                            <ScaleBar>
                                <ScaleButton>Scale...</ScaleButton>
                                <ScaleButton>Low</ScaleButton>
                                <ScaleButton>High</ScaleButton>
                                <ScaleButton>
                                    <svg width="30" height="14" viewBox="0 0 30 14">
                                        <path d="M1 5 V9 L6 7 Z M7 6.500 H11 M29 5 V9 L24 7 Z M23 6.500 H19" fill="#c4a8a8" stroke="#c4a8a8" />
                                        <path d="M15 1 V13" stroke="#c07020" strokeWidth="1.200" />
                                    </svg>
                                </ScaleButton>
                                <ScaleButton>Zoom</ScaleButton>
                            </ScaleBar>
                        </SpectrumBox>
                        <FreqRuler />
                        <SashBar><SashDots /></SashBar>
                        <WaterfallBox>
                            <Waterfall />
                            <MarkerLine $x={342} $c="#234a34" />
                            <MarkerLine $x={350} $c="#2c8a50" />
                            <MarkerLine $x={359} $c="#234a34" />
                        </WaterfallBox>
                        <OverviewBar>
                            <RoundButton $w={25} $r={2}><SkipIco flip /></RoundButton>
                            <OverviewRuler />
                            <RoundButton $w={38} $l={1}><KeyboardIco w={20} h={15} /></RoundButton>
                            <RoundButton $w={50} $between>x2<Caret $s={4} style={{ transform: 'rotate(-90deg)' }} /></RoundButton>
                            <RoundButton $w={24} $r={0}><SkipIco /></RoundButton>
                        </OverviewBar>
                    </DisplayColumn>
                    <Strip>
                        <AutoButton>Auto</AutoButton>
                        <ScaleList>
                            {STRIP_SCALE.map((v) => <ScaleItem key={v}>{v}</ScaleItem>)}
                        </ScaleList>
                        <ColorBar>
                            {CHIPS.map(([t, c, mt]) => <ColorChip key={c} $c={c} $mt={mt}>{t}</ColorChip>)}
                        </ColorBar>
                    </Strip>
                </DisplayRow>
                <RdsGap />
                <PaneHeader $h={21} $line>
                    RDS Logfile
                    <HeaderTools><Caret $s={5} $c="#111" />✕</HeaderTools>
                </PaneHeader>
                <RdsBody>
                    <RdsTools>
                        <ToolButton $on $s={9}>▸</ToolButton>
                        <ToolRow>
                            <ToolButton $w={10}>+</ToolButton>
                            <ToolButton $w={10}>-</ToolButton>
                        </ToolRow>
                        <ToolButton>»</ToolButton>
                        <ToolButton $on $s={14}>□</ToolButton>
                        <ToolButton>X</ToolButton>
                        <ToolButton>Edt</ToolButton>
                        <ToolButton>Txt</ToolButton>
                        <ToolButton $on $b $s={11}>•••</ToolButton>
                    </RdsTools>
                    <LogBox><LogHead /></LogBox>
                </RdsBody>
            </MainPane>
        </Body>

        <StatusBar>
            RTL Dongle - Unknown, BW = 2.500 MHz
            <StatusRight>
                CPU: 14.7%
                <Meter><MeterFill $w={4} /></Meter>
                Audio: 30ms
                <Meter><MeterFill $w={25} /></Meter>
            </StatusRight>
        </StatusBar>
    </Shell>
);

export default App;
